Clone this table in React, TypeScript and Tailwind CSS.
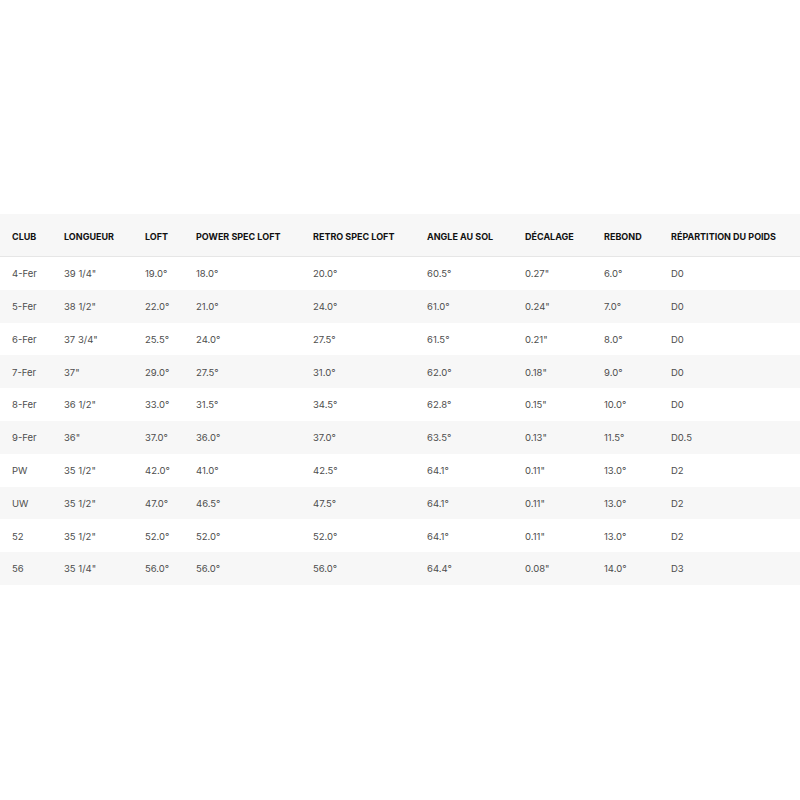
import React from "react";

const headers = [
  "CLUB",
  "LONGUEUR",
  "LOFT",
  "POWER SPEC LOFT",
  "RETRO SPEC LOFT",
  "ANGLE AU SOL",
  "DÉCALAGE",
  "REBOND",
  "RÉPARTITION DU POIDS",
];

const rows: string[][] = [
  ["4-Fer", "39 1/4\"", "19.0°", "18.0°", "20.0°", "60.5°", "0.27\"", "6.0°", "D0"],
  ["5-Fer", "38 1/2\"", "22.0°", "21.0°", "24.0°", "61.0°", "0.24\"", "7.0°", "D0"],
  ["6-Fer", "37 3/4\"", "25.5°", "24.0°", "27.5°", "61.5°", "0.21\"", "8.0°", "D0"],
  ["7-Fer", "37\"", "29.0°", "27.5°", "31.0°", "62.0°", "0.18\"", "9.0°", "D0"],
  ["8-Fer", "36 1/2\"", "33.0°", "31.5°", "34.5°", "62.8°", "0.15\"", "10.0°", "D0"],
  ["9-Fer", "36\"", "37.0°", "36.0°", "37.0°", "63.5°", "0.13\"", "11.5°", "D0.5"],
  ["PW", "35 1/2\"", "42.0°", "41.0°", "42.5°", "64.1°", "0.11\"", "13.0°", "D2"],
  ["UW", "35 1/2\"", "47.0°", "46.5°", "47.5°", "64.1°", "0.11\"", "13.0°", "D2"],
  ["52", "35 1/2\"", "52.0°", "52.0°", "52.0°", "64.1°", "0.11\"", "13.0°", "D2"],
  ["56", "35 1/4\"", "56.0°", "56.0°", "56.0°", "64.4°", "0.08\"", "14.0°", "D3"],
];

const grid =
  "grid grid-cols-[52px_81px_51px_117px_114px_98px_79px_67px_141px] items-center";

export default function App() {
  return (
    <div
      className="w-[800px] h-[800px] bg-white pt-[214px]"
      style={{ fontFamily: "Inter, 'Open Sans', Arial, sans-serif" }}
    >
      <div className={`${grid} h-[43px] pt-[3px] bg-[#f7f7f7] border-b border-[#e6e6e6]`}>
        {headers.map((h) => (
          <div
            key={h}
            className="pl-3 text-[9px] font-bold text-[#111] whitespace-nowrap"
          >
            {h}
          </div>
        ))}
      </div>
      {rows.map((r, i) => (
        <div
          key={r[0]}
          className={`${grid} h-[32.8px] pt-[2px] ${i % 2 === 1 ? "bg-[#f7f7f7]" : "bg-white"}`}
        >
          {r.map((c, j) => (
            <div
              key={j}
              className="pl-3 text-[9.5px] text-[#4d4d4d] whitespace-nowrap"
            >
              {c}
            </div>
          ))}
        </div>
      ))}
    </div>
  );
}
